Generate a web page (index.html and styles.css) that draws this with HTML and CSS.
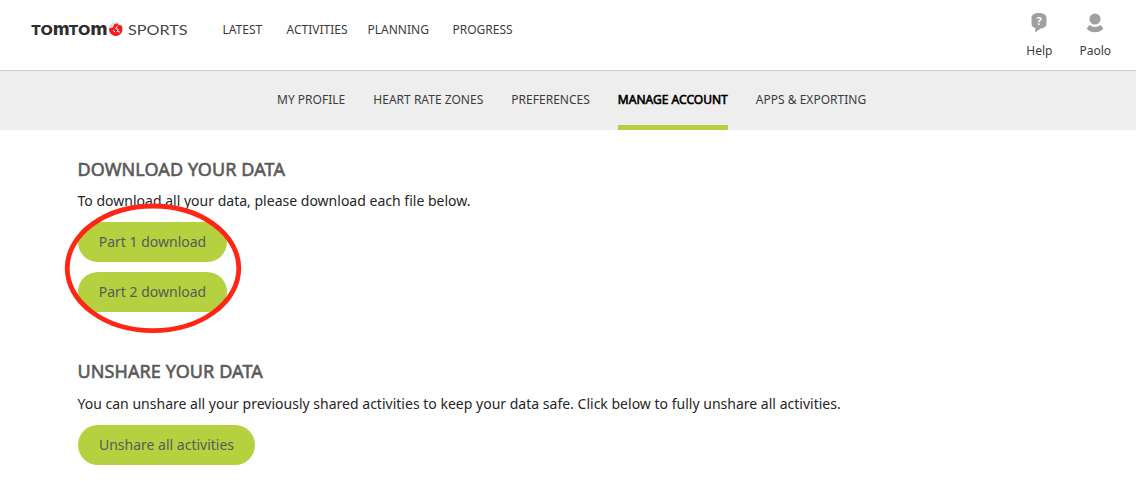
FILE: index.html
```html
<!DOCTYPE html>
<html lang="en">
<head>
<meta charset="utf-8">
<title>TomTom Sports</title>
<link rel="stylesheet" href="styles.css">
</head>
<body>
<header class="header">
  <svg class="logo" width="160" height="24" viewBox="0 0 160 24" role="img" aria-label="TomTom Sports">
    <g class="logo-brand">
      <text x="1" y="16.5" textLength="10" lengthAdjust="spacingAndGlyphs">T</text>
      <text x="10.6" y="16.5" textLength="12.4" lengthAdjust="spacingAndGlyphs">O</text>
      <text class="arch" x="23" y="16.5" textLength="16.5" lengthAdjust="spacingAndGlyphs">m</text>
      <text x="38.6" y="16.5" textLength="10" lengthAdjust="spacingAndGlyphs">T</text>
      <text x="48" y="16.5" textLength="12.4" lengthAdjust="spacingAndGlyphs">O</text>
      <text class="arch" x="60.6" y="16.5" textLength="17" lengthAdjust="spacingAndGlyphs">m</text>
    </g>
    <circle cx="85.6" cy="11.2" r="7" fill="#dedede"/>
    <path d="M79 10.4 83 9.5 84.2 6.4 87 5.2 88.4 7 91.6 7.6A7 7 0 0 1 88 17.6 7 7 0 0 1 79 10.4Z" fill="#f91a1a"/>
    <path d="M87.4 8 85.6 10.6 88.4 11.5 87.2 13.4 90 14M83.2 12.2 85 14.2" fill="none" stroke="#fff" stroke-width="1"/>
    <text class="logo-sports" x="98" y="16.5" textLength="59.5" lengthAdjust="spacingAndGlyphs">SPORTS</text>
  </svg>
  <nav class="main-nav">
    <a class="nav-latest">LATEST</a>
    <a class="nav-activities">ACTIVITIES</a>
    <a class="nav-planning">PLANNING</a>
    <a>PROGRESS</a>
  </nav>
  <div class="tools">
    <a class="tool">
      <svg width="16" height="20" viewBox="0 0 16 20"><path d="M8 0C12.4 0 15.5 1.8 15.5 5V10.5C15.5 14 12.5 15.2 9.5 15.6L4.3 19.6V15C2 14.4.5 13 .5 10.5V5C.5 1.8 3.6 0 8 0Z" fill="#9f9f9f"/><text class="question" x="8" y="12.3" text-anchor="middle">?</text></svg>
      <span>Help</span>
    </a>
    <a class="tool">
      <svg width="18" height="20" viewBox="0 0 18 20"><circle cx="9" cy="6" r="5.6" fill="#9f9f9f"/><path d="M3.2 12Q9 16 14.8 12L17.3 15.8Q14 19.3 9 19.3T.7 15.8Z" fill="#9f9f9f"/></svg>
      <span>Paolo</span>
    </a>
  </div>
</header>
<nav class="sub-nav">
  <a class="tab">MY PROFILE</a>
  <a class="tab">HEART RATE ZONES</a>
  <a class="tab">PREFERENCES</a>
  <a class="tab active">MANAGE ACCOUNT</a>
  <a class="tab">APPS &amp; EXPORTING</a>
</nav>
<main class="content">
  <section class="section section-download">
    <h2>DOWNLOAD YOUR DATA</h2>
    <p>To download all your data, please download each file below.</p>
    <div class="downloads">
      <button class="button part">Part 1 download</button>
      <button class="button part">Part 2 download</button>
      <svg class="highlight" width="180" height="132" viewBox="0 0 180 132"><ellipse cx="90" cy="66.3" rx="85.8" ry="62.3" fill="none" stroke="#ff2616" stroke-width="4.8"/></svg>
    </div>
  </section>
  <section class="section section-unshare">
    <h2>UNSHARE YOUR DATA</h2>
    <p>You can unshare all your previously shared activities to keep your data safe. Click below to fully unshare all activities.</p>
    <button class="button unshare">Unshare all activities</button>
  </section>
</main>
</body>
</html>
```
FILE: styles.css
```css
* { box-sizing: border-box; }
body {
  margin: 0;
  background: #fff;
  color: #262626;
  font-family: "Noto Sans", sans-serif;
  font-size: 14px;
}
.header {
  display: flex;
  height: 71px;
  padding-left: 30px;
  padding-right: 25px;
  border-bottom: 1px solid #ccc;
  color: #3c3c3c;
  font-size: 12px;
}
.logo { margin-top: 18px; flex: none; }
.logo-brand { font: 800 13.5px Inter, sans-serif; fill: #2e2e2e; }
.logo-brand .arch { font-size: 17.5px; }
.logo-sports { font: 400 14px Lato, sans-serif; fill: #454545; }
.main-nav { display: flex; margin-left: 32.5px; padding-top: 21px; line-height: 18px; white-space: nowrap; }
.nav-latest { width: 64px; }
.nav-activities { width: 81px; }
.nav-planning { width: 85px; }
.tools { display: flex; gap: 27px; margin-left: auto; padding-top: 13px; }
.tool { display: flex; flex-direction: column; align-items: center; }
.tool span { margin-top: 9px; line-height: 18px; }
.question { font: 700 11px "Noto Sans", sans-serif; fill: #fff; }
.sub-nav {
  display: flex;
  gap: 28px;
  height: 59px;
  padding-left: 277px;
  background: #eee;
  color: #3c3c3c;
  font-size: 12px;
  letter-spacing: .015px;
  line-height: 18px;
  white-space: nowrap;
}
.tab { padding-top: 20px; }
.active { border-bottom: 5px solid #b5d140; color: #000; -webkit-text-stroke: .6px #000; }
.content { padding: 27px 78px 0; }
.section-download { height: 202px; }
h2 { margin: 0 0 0 -.5px; color: #5a5a5a; font-size: 18px; font-weight: 400; letter-spacing: .1px; line-height: 25px; -webkit-text-stroke: .6px #5a5a5a; }
p { margin: 9px 0 11px -.5px; letter-spacing: .01px; line-height: 20px; white-space: nowrap; }
.section-unshare p { margin-top: 10px; }
.downloads { position: relative; display: flex; flex-direction: column; gap: 10px; width: 149px; }
.button { display: block; height: 40px; padding: 0 0 2px; border: 0; border-radius: 20px; background: #b5d140; color: #5a5a5a; font: 14px "Noto Sans", sans-serif; }
.unshare { width: 177px; }
.highlight { position: absolute; left: -15px; top: -20px; }
```
